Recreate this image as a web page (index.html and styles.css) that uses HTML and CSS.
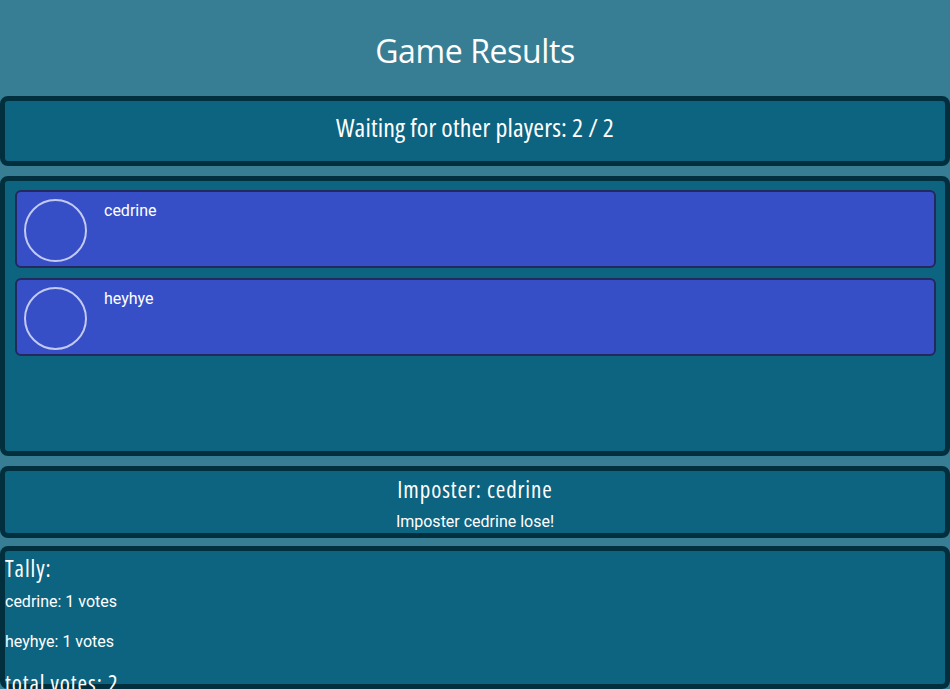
FILE: index.html
```html
<!DOCTYPE html>
<html lang="en">
<head>
<meta charset="utf-8">
<title>Game Results</title>
<link rel="stylesheet" href="styles.css">
</head>
<body>
<h1 class="title">Game Results</h1>

<section class="panel panel-waiting">
  <h2 class="waiting">Waiting for other players: 2 / 2</h2>
</section>

<section class="panel panel-players">
  <div class="player-card">
    <div class="avatar"></div>
    <div class="player-name">cedrine</div>
  </div>
  <div class="player-card">
    <div class="avatar"></div>
    <div class="player-name">heyhye</div>
  </div>
</section>

<section class="panel panel-result">
  <h3 class="imposter">Imposter: cedrine</h3>
  <p class="outcome">Imposter cedrine lose!</p>
</section>

<section class="panel panel-tally">
  <h3 class="tally-title">Tally:</h3>
  <p class="tally-line first">cedrine: 1 votes</p>
  <p class="tally-line second">heyhye: 1 votes</p>
  <h3 class="tally-total">total votes: 2</h3>
</section>
</body>
</html>
```
FILE: styles.css
```css
html, body {
  margin: 0;
  padding: 0;
}

body {
  background: #377e94;
  color: #ffffff;
  font-family: Roboto, "Noto Sans", sans-serif;
  overflow: hidden;
}

.title {
  font-family: "Open Sans", sans-serif;
  font-weight: 400;
  font-size: 32px;
  letter-spacing: -0.4px;
  line-height: 44px;
  text-align: center;
  margin: 29px 0 23px;
}

.panel {
  box-sizing: border-box;
  background: #0d6480;
  border: 5px solid #022f3e;
  border-radius: 8px;
}

.panel-waiting {
  height: 70px;
  padding-top: 9px;
  margin-bottom: 10px;
}

.waiting {
  font-family: "Open Sans", sans-serif;
  font-weight: 400;
  font-size: 26px;
  font-stretch: 75%;
  letter-spacing: 0.15px;
  line-height: 34px;
  text-align: center;
  margin: 0;
}

.panel-players {
  height: 280px;
  padding: 9px 9px 0 10px;
  margin-bottom: 10px;
  display: flex;
  flex-direction: column;
  gap: 10px;
}

.player-card {
  box-sizing: border-box;
  height: 78px;
  background: #364fc7;
  border: 2px solid #23295d;
  border-radius: 6px;
  display: flex;
  align-items: flex-start;
  padding: 7px;
}

.avatar {
  box-sizing: border-box;
  width: 63px;
  height: 63px;
  border-radius: 50%;
  border: 2px solid #c4c9f0;
  flex: none;
}

.player-name {
  font-size: 16px;
  font-weight: 400;
  line-height: 18px;
  margin: 3px 0 0 17px;
}

.panel-result {
  height: 72px;
  padding-top: 3px;
  margin-bottom: 8px;
  text-align: center;
}

.imposter {
  font-family: "Open Sans", sans-serif;
  font-weight: 400;
  font-size: 23px;
  font-stretch: 75%;
  letter-spacing: 0.9px;
  line-height: 30px;
  margin: 0;
}

.outcome {
  font-size: 16px;
  font-weight: 400;
  line-height: 18px;
  margin: 9px 0 0;
}

.panel-tally {
  height: 143px;
  padding-top: 2px;
  overflow: visible;
}

.tally-title,
.tally-total {
  font-family: "Open Sans", sans-serif;
  font-weight: 400;
  font-size: 23px;
  font-stretch: 75%;
  letter-spacing: 0.9px;
  line-height: 30px;
  margin: 0;
  position: relative;
}

.tally-title {
  margin-bottom: 10px;
}

.tally-line {
  font-size: 16px;
  font-weight: 400;
  line-height: 18px;
  margin: 0;
}

.tally-line.first {
  margin-bottom: 22px;
}

.tally-line.second {
  margin-bottom: 17px;
}
```
